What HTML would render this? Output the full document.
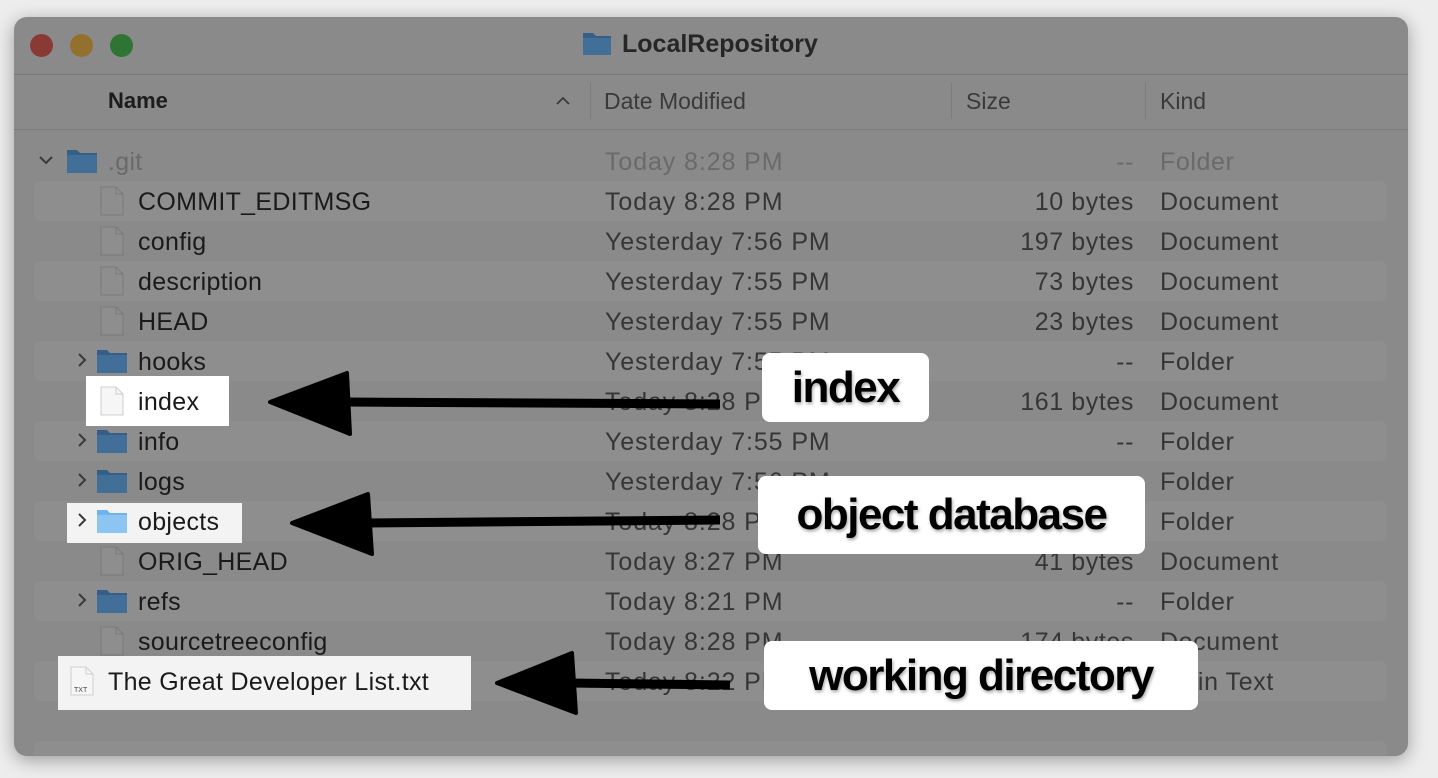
<!DOCTYPE html>
<html><head><meta charset="utf-8"><style>
body{margin:0;width:1438px;height:778px;background:#ededed;position:relative;overflow:hidden;font-family:"Liberation Sans",sans-serif}
.win{position:absolute;left:14px;top:17px;width:1394px;height:739px;background:#8a8a8a;border-radius:13px;box-shadow:0 4px 18px rgba(0,0,0,.35);overflow:hidden}
.a{position:absolute;white-space:nowrap}
.row{position:absolute;left:20px;width:1353px;height:40px;border-radius:7px;background:#8e8e8e}
.t{position:absolute;font-size:25px;line-height:40px;color:#1c1c1c;white-space:nowrap}
.lab{position:absolute;background:#fff;border-radius:8px;font-weight:bold;color:#000;font-size:44px;letter-spacing:-1.5px;text-shadow:1px 2px 3px rgba(0,0,0,.35);display:flex;align-items:center;justify-content:center}
.hl{position:absolute;background:#fff}
</style></head><body>
<div class="win">
 <div class="a" style="left:16px;top:17px;width:23px;height:23px;border-radius:50%;background:#8a3a35"></div>
 <div class="a" style="left:56px;top:17px;width:23px;height:23px;border-radius:50%;background:#94702f"></div>
 <div class="a" style="left:96px;top:17px;width:23px;height:23px;border-radius:50%;background:#2e7533"></div>
 <svg class="a" style="left:568px;top:12px" width="30" height="28"><path d="M1 4h10l3 3h15v19H1z" fill="#355f86"/><rect x="1" y="9" width="28" height="17" fill="#426f98"/></svg>
 <div class="a" style="left:608px;top:13px;font-size:25px;font-weight:bold;color:#262626">LocalRepository</div>
 <div class="a" style="left:0;top:57px;width:1394px;height:1px;background:#7a7a7a"></div>
 <div class="a" style="left:0;top:112px;width:1394px;height:1px;background:#7a7a7a"></div>
 <div class="a" style="left:576px;top:66px;width:1px;height:36px;background:#7c7c7c"></div>
 <div class="a" style="left:937px;top:66px;width:1px;height:36px;background:#7c7c7c"></div>
 <div class="a" style="left:1131px;top:66px;width:1px;height:36px;background:#7c7c7c"></div>
 <div class="a" style="left:94px;top:71px;font-size:22px;font-weight:bold;color:#1c1c1c">Name</div>
 <svg class="a" style="left:541px;top:78px" width="16" height="12"><path d="M2 9l6-6 6 6" stroke="#3a3a3a" stroke-width="1.8" fill="none"/></svg>
 <div class="a" style="left:590px;top:71px;font-size:23px;color:#3a3a3a">Date Modified</div>
 <div class="a" style="left:952px;top:71px;font-size:23px;color:#3a3a3a">Size</div>
 <div class="a" style="left:1146px;top:71px;font-size:23px;color:#3a3a3a">Kind</div>
 <div class="row" style="top:164px"></div>
 <div class="row" style="top:244px"></div>
 <div class="row" style="top:324px"></div>
 <div class="row" style="top:404px"></div>
 <div class="row" style="top:484px"></div>
 <div class="row" style="top:564px"></div>
 <div class="row" style="top:644px"></div>
 <div class="row" style="top:724px"></div>
</div>
<div class="hl" style="left:86px;top:376px;width:143px;height:50px"></div>
<div class="hl" style="left:67px;top:503px;width:175px;height:40px;background:#f3f3f3"></div>
<div class="hl" style="left:58px;top:656px;width:413px;height:54px;background:#f3f3f3"></div>
<div id="rows"></div>
<script>
var R=[
[".git","Today 8:28 PM","--","Folder","fo",1,0],
["COMMIT_EDITMSG","Today 8:28 PM","10 bytes","Document","doc",0,1],
["config","Yesterday 7:56 PM","197 bytes","Document","doc",0,1],
["description","Yesterday 7:55 PM","73 bytes","Document","doc",0,1],
["HEAD","Yesterday 7:55 PM","23 bytes","Document","doc",0,1],
["hooks","Yesterday 7:55 PM","--","Folder","fc",0,1],
["index","Today 8:28 PM","161 bytes","Document","doc",0,1],
["info","Yesterday 7:55 PM","--","Folder","fc",0,1],
["logs","Yesterday 7:56 PM","--","Folder","fc",0,1],
["objects","Today 8:28 PM","--","Folder","fc",0,1],
["ORIG_HEAD","Today 8:27 PM","41 bytes","Document","doc",0,1],
["refs","Today 8:21 PM","--","Folder","fc",0,1],
["sourcetreeconfig","Today 8:28 PM","174 bytes","Document","doc",0,1],
["The Great Developer List.txt","Today 8:22 PM","","Plain Text","txt",0,0]];
var h="";
R.forEach(function(r,i){
 var y=140+40*i, ty=y+2, dim=r[5];
 var nx=r[6]?138:108, ix=r[6]?98:68;
 var hi=(i==6||i==13), obj=(i==9);
 var dc=dim?"#6a6a6a":"#363636", nc=dim?"#6a6a6a":"#1a1a1a";
 if(r[4]=="fo"||r[4]=="fc"){
  var fx=r[4]=="fo"?66:96, col=obj?"#6fb2ec":"#355f86", col2=obj?"#8cc4f2":"#426f98";
  h+='<svg class="a" style="left:'+fx+'px;top:'+(y+8)+'px" width="32" height="26"><path d="M1 2h10l3 3h17v20H1z" fill="'+col+'"/><rect x="1" y="7" width="30" height="18" rx="1" fill="'+col2+'"/></svg>';
  var cx=r[4]=="fo"?38:74;
  h+='<svg class="a" style="left:'+cx+'px;top:'+(y+12)+'px" width="16" height="16">'+(r[4]=="fo"?'<path d="M2 5l6 6 6-6" stroke="#3a3a3a" stroke-width="2" fill="none"/>':'<path d="M5 2l6 6-6 6" stroke="#3a3a3a" stroke-width="2" fill="none"/>')+'</svg>';
 } else {
  var fc=hi?"#f6f6f6":"#8e8e8e", st=hi?"#cfcfcf":"#7a7a7a";
  h+='<svg class="a" style="left:'+ix+'px;top:'+(y+6)+'px" width="28" height="30"><path d="M3 1h15l7 7v21H3z" fill="'+fc+'" stroke="'+st+'"/><path d="M18 1v7h7" fill="none" stroke="'+st+'"/>'+(r[4]=="txt"?'<text x="6" y="26" font-size="7" fill="#444" font-family="Liberation Sans">TXT</text>':'')+'</svg>';
 }
 h+='<div class="t" style="left:'+nx+'px;top:'+ty+'px;color:'+nc+';letter-spacing:0.3px">'+r[0]+'</div>';
 h+='<div class="t" style="left:605px;top:'+ty+'px;color:'+dc+';letter-spacing:0.9px">'+r[1]+'</div>';
 h+='<div class="t" style="right:'+(1438-1134)+'px;top:'+ty+'px;color:'+dc+';letter-spacing:0.6px">'+r[2]+'</div>';
 h+='<div class="t" style="left:1160px;top:'+ty+'px;color:'+dc+';letter-spacing:0.6px">'+r[3]+'</div>';
});
document.getElementById("rows").innerHTML=h;
</script>
<svg class="a" style="left:0;top:0" width="1438" height="778">
 <path d="M720 404L345 402" stroke="#000" stroke-width="9"/>
 <path d="M270 402L347 373L350 434Z" fill="#000" stroke="#000" stroke-width="4" stroke-linejoin="round"/>
 <path d="M720 520L365 523" stroke="#000" stroke-width="9"/>
 <path d="M292 523L368 494L372 554Z" fill="#000" stroke="#000" stroke-width="4" stroke-linejoin="round"/>
 <path d="M730 685L570 683" stroke="#000" stroke-width="9"/>
 <path d="M497 683L572 653L576 713Z" fill="#000" stroke="#000" stroke-width="4" stroke-linejoin="round"/>
</svg>
<div class="lab" style="left:762px;top:353px;width:167px;height:69px">index</div>
<div class="lab" style="left:758px;top:476px;width:387px;height:78px">object database</div>
<div class="lab" style="left:764px;top:641px;width:434px;height:69px">working directory</div>
</body></html>
